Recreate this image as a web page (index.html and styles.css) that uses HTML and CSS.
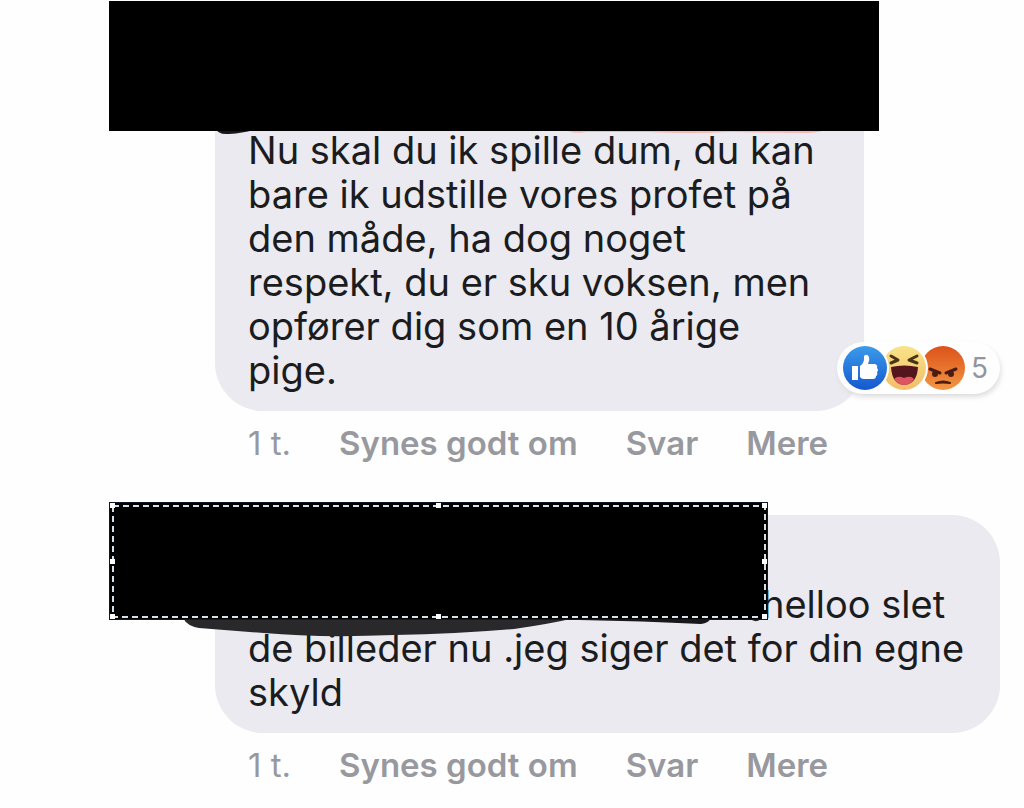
FILE: index.html
```html
<!DOCTYPE html>
<html lang="da">
<head>
    <meta charset="utf-8">
    <title>Kommentarer</title>
    <link rel="stylesheet" href="styles.css">
</head>
<body>
    <main class="thread">
        <article class="comment comment-first">
            <div class="bubble">
                <p>Nu skal du ik spille dum, du kan bare ik udstille vores profet på den måde, ha dog noget respekt, du er sku voksen, men opfører dig som en 10 årige pige.</p>
            </div>
            <svg class="marker" width="770" height="140" viewBox="0 0 770 140" aria-hidden="true">
                <path d="M106 126 Q108 134 120 133 Q134 132 144 129 V126Z" fill="#18181b"/>
                <path d="M451 126 Q462 134 478 131 L540 131 Q580 133 620 131 L700 132 Q716 131 722 126Z" fill="#fbb5ae"/>
            </svg>
            <div class="redacted"></div>
            <div class="reactions">
                <svg class="like" width="48" height="48" viewBox="0 0 48 48" aria-hidden="true">
                    <defs>
                        <linearGradient id="blue" x1="0" y1="0" x2="0" y2="1">
                            <stop offset="0" stop-color="#3b9bea"/>
                            <stop offset="1" stop-color="#1558cf"/>
                        </linearGradient>
                    </defs>
                    <circle cx="24" cy="24" r="24" fill="#fefefe"/>
                    <circle cx="24" cy="24" r="22" fill="url(#blue)"/>
                    <path d="M11 22h6v14h-6z" fill="#fff"/>
                    <path d="M19 22 Q23 19 23 15 V12 Q26 9 28 13 Q29 16 27 20 H34 Q37 21 36 24 Q38 26 36 28 Q37 31 35 32 Q35 35 32 35 H23 Q20 35 19 33Z" fill="#fff"/>
                </svg>
                <svg class="haha" width="48" height="48" viewBox="0 0 48 48" aria-hidden="true">
                    <defs>
                        <linearGradient id="yellow" x1="0" y1="0" x2="0" y2="1">
                            <stop offset="0" stop-color="#f9e388"/>
                            <stop offset="1" stop-color="#f2bd69"/>
                        </linearGradient>
                    </defs>
                    <circle cx="24" cy="24" r="24" fill="#fefefe"/>
                    <circle cx="24" cy="24" r="22" fill="url(#yellow)"/>
                    <path d="M11 12 L18 16 L11 19 M37 12 L29 16 L37 19" fill="none" stroke="#4a3514" stroke-width="3" stroke-linecap="round" stroke-linejoin="round"/>
                    <path d="M11 23 Q24 20 38 23 Q37 40 24 41 Q12 40 11 23Z" fill="#54151d"/>
                    <path d="M14 35 Q18 31 24 34 Q31 31 34 35 Q30 41 24 41 Q18 41 14 35Z" fill="#dc5560"/>
                </svg>
                <svg class="angry" width="48" height="48" viewBox="0 0 48 48" aria-hidden="true">
                    <defs>
                        <linearGradient id="orange" x1="0" y1="0" x2="0" y2="1">
                            <stop offset="0" stop-color="#dc5219"/>
                            <stop offset="1" stop-color="#f29744"/>
                        </linearGradient>
                    </defs>
                    <circle cx="24" cy="24" r="22" fill="url(#orange)"/>
                    <path d="M11 25 L21 29 M37 25 L27 29" stroke="#4b1d12" stroke-width="3" stroke-linecap="round"/>
                    <circle cx="16" cy="30" r="3" fill="#4b1d12"/>
                    <circle cx="32" cy="30" r="3" fill="#4b1d12"/>
                    <path d="M17 39 Q24 36 31 39 Q24 38 17 39Z" fill="#4b1d12" stroke="#4b1d12" stroke-width="2" stroke-linejoin="round"/>
                </svg>
                <span class="count">5</span>
            </div>
            <footer class="actions">
                <time>1 t.</time>
                <button type="button">Synes godt om</button>
                <button type="button">Svar</button>
                <button type="button">Mere</button>
            </footer>
        </article>

        <article class="comment comment-second">
            <div class="bubble">
                <p><span class="name"></span>helloo slet<br>de billeder nu .jeg siger det for din egne skyld</p>
            </div>
            <svg class="marker" width="660" height="140" viewBox="0 0 660 140" aria-hidden="true">
                <path d="M74 116 Q78 124 90 126 L155 131 Q210 136 285 133 Q350 132 405 127 Q440 122 466 116Z" fill="#29292c"/>
                <path d="M470 116 V118 Q535 119 592 122 Q600 121 602 116Z" fill="#18181b"/>
                <path d="M640 116 Q646 122 652 117Z" fill="#29292c"/>
            </svg>
            <div class="redacted selected">
                <svg class="selection" width="100%" height="100%" aria-hidden="true">
                    <rect width="100%" height="100%" fill="none" stroke="#d5e0ea" stroke-width="2" stroke-dasharray="6 4"/>
                </svg>
                <i class="handle"></i><i class="handle"></i><i class="handle"></i>
                <i class="handle"></i><i class="handle side-end"></i>
                <i class="handle"></i><i class="handle"></i><i class="handle"></i>
            </div>
            <footer class="actions">
                <time>1 t.</time>
                <button type="button">Synes godt om</button>
                <button type="button">Svar</button>
                <button type="button">Mere</button>
            </footer>
        </article>
    </main>
</body>
</html>
```

FILE: styles.css
```css
* { box-sizing: border-box; }
body { margin: 0; background: #fefefe; color: #1b1c20; font-family: Inter, "Liberation Sans", sans-serif; }
.thread { padding: 32px 24px 24px 215px; }
.comment { position: relative; }
.comment-first { margin-bottom: 40px; }

.bubble { background: #eaeaf0; border-radius: 48px; padding: 67px 32px 19px 33px; }
.comment-first .bubble { margin-right: 136px; padding-top: 96px; }
.bubble p { margin: 0; font-size: 38px; line-height: 44px; }
.name { display: inline-block; width: 514px; }

/* boxes drawn over the names */
.marker { position: absolute; top: -13px; left: -106px; }
.redacted { position: absolute; top: -13px; left: -106px; width: 659px; height: 118px; background: #000; }
.comment-first .marker, .comment-first .redacted { top: -31px; }
.comment-first .redacted { width: 770px; height: 130px; }
.selected { display: grid; grid-template-columns: auto auto auto; justify-content: space-between; align-content: space-between; border: 1px solid #0c1626; }
.selection { position: absolute; inset: 3px; width: calc(100% - 5px); height: calc(100% - 5px); overflow: visible; }
.handle { width: 5px; height: 5px; background: #fff; z-index: 1; }
.side-end { grid-column: 3; }

.actions { display: flex; align-items: center; gap: 48px; height: 64px; padding-left: 33px; font-size: 33px; line-height: 40px; color: #98999e; }
.actions button { border: 0; padding: 0; background: none; color: inherit; font: inherit; font-weight: 600; cursor: pointer; }

.reactions { position: absolute; right: 0; bottom: 81px; display: flex; align-items: center; height: 52px; padding: 0 12px 0 4px; border-radius: 26px; background: #fefefe; box-shadow: 1px 3px 5px #dddddf; }
.reactions svg { position: relative; }
.reactions .like { z-index: 2; }
.reactions .haha { z-index: 1; margin-left: -9px; }
.reactions .angry { margin-left: -9px; }
.count { margin-left: 4px; font-size: 28px; color: #94959a; }
```
